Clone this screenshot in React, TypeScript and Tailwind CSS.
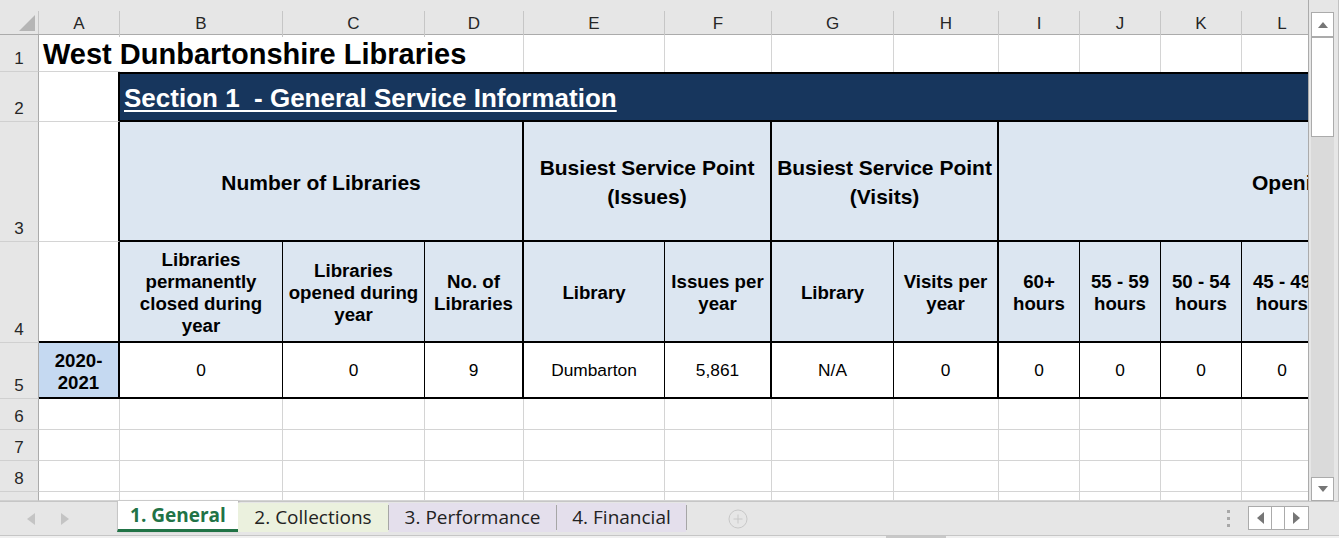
import React from 'react';

const GRID = 'border-[#d4d4d4]';
const SHEET_FONT = "font-['Liberation_Sans',Arial,sans-serif]";

function RowHead({ n }: { n?: string }) {
  return (
    <div className="w-[39px] shrink-0 bg-[#e6e6e6] border-r border-b border-r-[#ababab] border-b-[#d0d0d0] flex items-end justify-center pb-[4px] text-[17px] leading-[17px] text-[#262626]">
      {n}
    </div>
  );
}

function ColHead({ w, label }: { w: string; label: string }) {
  return (
    <div className={`${w} shrink-0 flex flex-col pt-[11px]`}>
      <div className="flex-1 border-r border-[#c6c6c6] flex items-center justify-center text-[17px] text-[#262626]">
        {label}
      </div>
    </div>
  );
}

const COLS: [string, string][] = [
  ['A', 'w-[81px]'],
  ['B', 'w-[163px]'],
  ['C', 'w-[142px]'],
  ['D', 'w-[99px]'],
  ['E', 'w-[141px]'],
  ['F', 'w-[107px]'],
  ['G', 'w-[122px]'],
  ['H', 'w-[105px]'],
  ['I', 'w-[81px]'],
  ['J', 'w-[81px]'],
  ['K', 'w-[81px]'],
  ['L', 'w-[81px]'],
];

// thick (group) borders on the right of D, F, H
const SUB = [
  { w: 'w-[163px]', r: 'border-r', head: 'Libraries permanently closed during year', val: '0' },
  { w: 'w-[142px]', r: 'border-r', head: 'Libraries opened during year', val: '0' },
  { w: 'w-[99px]', r: 'border-r-2', head: 'No. of Libraries', val: '9' },
  { w: 'w-[141px]', r: 'border-r', head: 'Library', val: 'Dumbarton' },
  { w: 'w-[107px]', r: 'border-r-2', head: 'Issues per year', val: '5,861' },
  { w: 'w-[122px]', r: 'border-r', head: 'Library', val: 'N/A' },
  { w: 'w-[105px]', r: 'border-r-2', head: 'Visits per year', val: '0' },
  { w: 'w-[81px]', r: 'border-r', head: '60+ hours', val: '0' },
  { w: 'w-[81px]', r: 'border-r', head: '55 - 59 hours', val: '0' },
  { w: 'w-[81px]', r: 'border-r', head: '50 - 54 hours', val: '0' },
  { w: 'w-[81px]', r: 'border-r', head: '45 - 49 hours', val: '0' },
];

function EmptyRow({ n, h }: { n?: string; h: string }) {
  return (
    <div className={`flex ${h}`}>
      <RowHead n={n} />
      {COLS.map(([c, w]) => (
        <div key={c} className={`${w} shrink-0 border-r border-b ${GRID}`} />
      ))}
    </div>
  );
}

function Sheet() {
  return (
    <div className={`w-[1309px] h-full overflow-hidden border-r border-[#ababab] bg-white ${SHEET_FONT}`}>
      <div className="w-[1323px] h-full flex flex-col">
        {/* column headers */}
        <div className="flex h-[35px] shrink-0 bg-[#e6e6e6] border-b border-[#ababab]">
          <div className="w-[39px] shrink-0 flex flex-col pt-[11px]">
            <div className="flex-1 border-r border-[#c6c6c6] flex items-end justify-end pr-[2px] pb-[2px]">
              <svg width="17" height="17" viewBox="0 0 17 17">
                <polygon points="16,0 16,16 0,16" fill="#b5b5b5" />
              </svg>
            </div>
          </div>
          {COLS.map(([c, w]) => (
            <ColHead key={c} w={w} label={c} />
          ))}
        </div>

        {/* row 1 */}
        <div className="flex h-[37px] shrink-0">
          <RowHead n="1" />
          <div className={`w-[81px] shrink-0 border-b ${GRID} flex items-end pl-[4px] pb-[2px] whitespace-nowrap`}>
            <span className="relative z-10 font-bold text-[29px] leading-[29px] text-black">
              West Dunbartonshire Libraries
            </span>
          </div>
          <div className="w-[163px] shrink-0" />
          <div className="w-[142px] shrink-0" />
          <div className={`w-[99px] shrink-0 border-r ${GRID}`} />
          {COLS.slice(4).map(([c, w]) => (
            <div key={c} className={`${w} shrink-0 border-r ${GRID}`} />
          ))}
        </div>

        {/* row 2 */}
        <div className="flex h-[50px] shrink-0">
          <RowHead n="2" />
          <div className="w-[81px] shrink-0 border-r-2 border-r-black border-b border-b-[#d4d4d4]" />
          <div className="flex-1 bg-[#17365d] border-y-2 border-black flex items-end pl-[4px] pb-[7px]">
            <span className="text-white font-bold text-[26px] leading-[30px] underline decoration-2 underline-offset-[3px] whitespace-pre">
              Section 1  - General Service Information
            </span>
          </div>
        </div>

        {/* row 3 */}
        <div className="flex h-[120px] shrink-0">
          <RowHead n="3" />
          <div className="w-[81px] shrink-0 border-r-2 border-r-black border-b border-b-[#d4d4d4]" />
          <div className="w-[404px] shrink-0 bg-[#dce6f1] border-r-2 border-b-2 border-black flex items-center justify-center pt-[2px] text-center font-bold text-[21px] leading-[29px] text-black">
            Number of Libraries
          </div>
          <div className="w-[248px] shrink-0 bg-[#dce6f1] border-r-2 border-b-2 border-black flex items-center justify-center pt-[2px] text-center font-bold text-[21px] leading-[29px] text-black">
            Busiest Service Point
            <br />
            (Issues)
          </div>
          <div className="w-[227px] shrink-0 bg-[#dce6f1] border-r-2 border-b-2 border-black flex items-center justify-center pt-[2px] text-center font-bold text-[21px] leading-[29px] text-black">
            Busiest Service Point
            <br />
            (Visits)
          </div>
          <div className="flex-1 bg-[#dce6f1] border-b-2 border-black flex items-center pl-[253px] pt-[2px] whitespace-nowrap overflow-hidden font-bold text-[21px] leading-[29px] text-black">
            Opening Hours per Week
          </div>
        </div>

        {/* row 4 */}
        <div className="flex h-[101px] shrink-0">
          <RowHead n="4" />
          <div className="w-[81px] shrink-0 border-r-2 border-b-2 border-black" />
          {SUB.map((s, i) => (
            <div
              key={i}
              className={`${s.w} ${s.r} shrink-0 border-b-2 border-black bg-[#dce6f1] flex items-center justify-center text-center px-[2px] pt-[2px] font-bold text-[18.67px] leading-[22px] text-black`}
            >
              {s.head}
            </div>
          ))}
        </div>

        {/* row 5 */}
        <div className="flex h-[56px] shrink-0">
          <RowHead n="5" />
          <div className="w-[81px] shrink-0 bg-[#c5d9f1] border-r-2 border-b-2 border-black flex items-center justify-center pt-[3px] text-center font-bold text-[18.67px] leading-[22px] text-black">
            2020-
            <br />
            2021
          </div>
          {SUB.map((s, i) => (
            <div
              key={i}
              className={`${s.w} ${s.r} shrink-0 border-b-2 border-black bg-white flex items-center justify-center pt-[2px] text-[17.33px] text-black`}
            >
              {s.val}
            </div>
          ))}
        </div>

        <EmptyRow n="6" h="h-[31px] shrink-0" />
        <EmptyRow n="7" h="h-[31px] shrink-0" />
        <EmptyRow n="8" h="h-[31px] shrink-0" />
        <EmptyRow h="flex-1" />
      </div>
    </div>
  );
}

function Scrollbar() {
  return (
    <div className="w-[30px] h-full bg-[#e6e6e6] border-r border-[#c2c2c2] flex flex-col pl-[2px] pt-[12px]">
      <div className="w-[23px] h-[25px] shrink-0 bg-white border border-[#ababab] flex items-center justify-center">
        <svg width="10" height="6" viewBox="0 0 10 6">
          <polygon points="5,0 10,6 0,6" fill="#767676" />
        </svg>
      </div>
      <div className="w-[23px] h-[100px] shrink-0 bg-white border border-[#ababab]" />
      <div className="w-[23px] flex-1 bg-[#dadada]" />
      <div className="w-[23px] h-[24px] shrink-0 bg-white border border-[#ababab] flex items-center justify-center">
        <svg width="10" height="6" viewBox="0 0 10 6">
          <polygon points="0,0 10,0 5,6" fill="#767676" />
        </svg>
      </div>
    </div>
  );
}

function Tab({ label, w, bg }: { label: string; w: string; bg: string }) {
  return (
    <div className={`${w} ${bg} shrink-0 mt-[1px] h-[29px] flex items-center justify-center text-[19px] text-[#222]`}>
      {label}
    </div>
  );
}

function TabSep() {
  return <div className="w-px h-[25px] mt-[3px] shrink-0 bg-[#a6a6a6]" />;
}

function TabBar() {
  return (
    <div className="h-[37px] bg-[#e6e6e6] border-t border-[#c6c6c6] flex flex-col font-['Open_Sans','Noto_Sans',sans-serif]">
      <div className="h-[33px] flex items-start">
        <div className="w-[117px] shrink-0 h-full flex items-center">
          <svg className="ml-[27px]" width="8" height="12" viewBox="0 0 8 12">
            <polygon points="8,0 8,12 0,6" fill="#c4c4c4" />
          </svg>
          <svg className="ml-[26px]" width="8" height="12" viewBox="0 0 8 12">
            <polygon points="0,0 8,6 0,12" fill="#c4c4c4" />
          </svg>
        </div>
        <div className="w-[121px] shrink-0 -mt-px h-[31px] bg-white border-l border-[#c6c6c6] border-b-[3px] border-b-[#217346] flex items-center justify-center pt-[1px] font-bold text-[19px] text-[#217346] shadow-[1px_0_2px_rgba(0,0,0,0.15)]">
          1. General
        </div>
        <Tab label="2. Collections" w="w-[150px]" bg="bg-[#ebf1de]" />
        <TabSep />
        <Tab label="3. Performance" w="w-[167px]" bg="bg-[#e4dfec]" />
        <TabSep />
        <Tab label="4. Financial" w="w-[129px]" bg="bg-[#e4dfec]" />
        <TabSep />
        <div className="ml-[41px] h-full flex items-center">
          <svg width="20" height="20" viewBox="0 0 20 20">
            <circle cx="10" cy="10" r="9" fill="none" stroke="#c8c8c8" strokeWidth="1" />
            <line x1="10" y1="5.5" x2="10" y2="14.5" stroke="#c8c8c8" strokeWidth="1" />
            <line x1="5.5" y1="10" x2="14.5" y2="10" stroke="#c8c8c8" strokeWidth="1" />
          </svg>
        </div>
        <div className="flex-1" />
        <div className="h-full flex flex-col justify-center gap-[4px] mr-[18px]">
          <div className="w-[3px] h-[3px] bg-[#a8a8a8]" />
          <div className="w-[3px] h-[3px] bg-[#a8a8a8]" />
          <div className="w-[3px] h-[3px] bg-[#a8a8a8]" />
        </div>
        <div className="mt-[4px] h-[24px] flex bg-white border border-[#ababab]">
          <div className="w-[23px] border-r border-[#ababab] flex items-center justify-center">
            <svg width="7" height="12" viewBox="0 0 7 12">
              <polygon points="7,0 7,12 0,6" fill="#767676" />
            </svg>
          </div>
          <div className="w-[13px] border-r border-[#ababab]" />
          <div className="w-[23px] flex items-center justify-center">
            <svg width="7" height="12" viewBox="0 0 7 12">
              <polygon points="0,0 7,6 0,12" fill="#767676" />
            </svg>
          </div>
        </div>
        <div className="w-[30px] shrink-0" />
      </div>
      <div className="h-[3px] border-t border-[#c6c6c6] bg-[#f0f0f0] flex">
        <div className="ml-[886px] w-[60px] h-full bg-[#c8c8c8]" />
      </div>
    </div>
  );
}

export default function App() {
  return (
    <div className="w-[1339px] h-[538px] overflow-hidden flex flex-col bg-[#e6e6e6]">
      <div className="flex h-[501px] shrink-0">
        <Sheet />
        <Scrollbar />
      </div>
      <TabBar />
    </div>
  );
}
